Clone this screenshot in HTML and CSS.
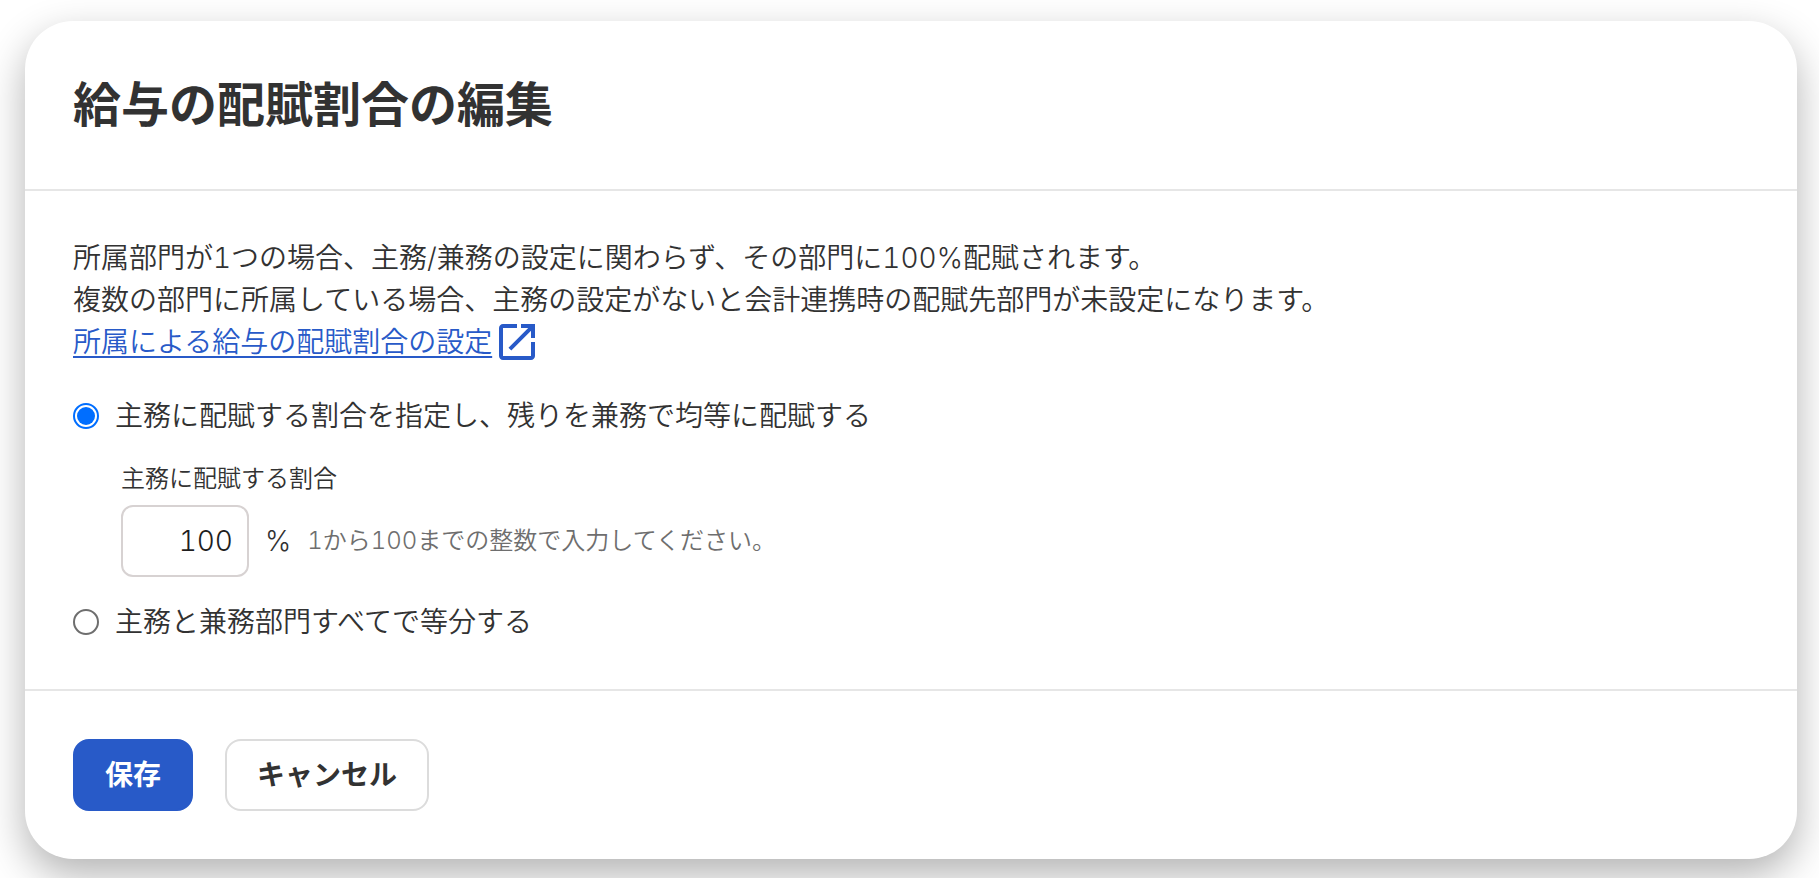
FILE: index.html
```html
<!DOCTYPE html>
<html lang="ja">
<head>
  <meta charset="UTF-8">
  <meta name="viewport" content="width=device-width, initial-scale=1.0">
  <title>給与の配賦割合の編集</title>
  <link rel="stylesheet" href="styles.css">
</head>
<body>
  <form class="dialog" role="dialog" aria-labelledby="dialogTitle">
    <header class="dialog-header">
      <h1 id="dialogTitle">給与の配賦割合の編集</h1>
    </header>

    <div class="dialog-body">
      <p class="description">
        所属部門が1つの場合、主務/兼務の設定に関わらず、その部門に100%配賦されます。<br>
        複数の部門に所属している場合、主務の設定がないと会計連携時の配賦先部門が未設定になります。<br>
        <a class="help-link" href="#"><span>所属による給与の配賦割合の設定</span><svg class="icon" viewBox="0 0 36 36" aria-hidden="true"><path d="M32 32H4V4h14V0H4C1.8 0 0 1.8 0 4v28c0 2.200 1.800 4 4 4h28c2.200 0 4-1.800 4-4V18h-4v14zM22 0v4h7.200L9.500 23.700l2.800 2.800L32 6.800V14h4V0H22z"/></svg></a>
      </p>

      <label class="radio">
        <input type="radio" name="method" value="main" checked>
        主務に配賦する割合を指定し、残りを兼務で均等に配賦する
      </label>

      <div class="ratio">
        <label class="ratio-label" for="ratio">主務に配賦する割合</label>
        <div class="ratio-row">
          <input type="text" id="ratio" inputmode="numeric" value="100" aria-describedby="ratioHint">
          <span class="unit">%</span>
          <span class="hint" id="ratioHint">1から100までの整数で入力してください。</span>
        </div>
      </div>

      <label class="radio">
        <input type="radio" name="method" value="equal">
        主務と兼務部門すべてで等分する
      </label>
    </div>

    <footer class="dialog-footer">
      <button type="submit" class="primary">保存</button>
      <button type="button">キャンセル</button>
    </footer>
  </form>
</body>
</html>
```
FILE: styles.css
```css
* { box-sizing: border-box; }
body {
  margin: 0;
  padding: 21px 22px 19px 25px;
  background: #fff;
  color: #323232;
  font-family: Inter, "Noto Sans CJK JP", sans-serif;
  font-size: 28px;
  font-weight: 350;
  font-variant-numeric: tabular-nums;
  line-height: 42px;
}
.dialog {
  background: #fff;
  border-radius: 48px;
  box-shadow: 0 16px 40px rgba(0,0,0,0.3);
}
.dialog-header {
  padding: 48px;
  border-bottom: 2px solid #e6e6e6;
}
h1 {
  margin: 0;
  font-size: 48px;
  font-weight: bold;
  line-height: 72px;
}
.dialog-body { padding: 46px 48px; }
.description { margin: 0 0 32px; }
.help-link {
  display: flex;
  align-items: center;
  gap: 7px;
  width: fit-content;
  color: #285ac8;
  text-decoration: none;
}
.help-link span {
  text-decoration: underline;
  text-decoration-thickness: 2px;
  text-underline-offset: 4px;
}
.icon {
  width: 36px;
  height: 36px;
  fill: currentColor;
}
.radio {
  display: flex;
  align-items: center;
  gap: 16px;
}
.radio input {
  appearance: none;
  flex-shrink: 0;
  width: 26px;
  height: 26px;
  margin: 0;
  border: 2px solid #6e6e6e;
  border-radius: 50%;
  background: #fff;
}
.radio input:checked {
  padding: 2px;
  border-color: #006eff;
  background: #006eff content-box;
}
.ratio { margin: 24px 48px; }
.ratio-label {
  display: block;
  margin-bottom: 8px;
  font-size: 24px;
  line-height: 36px;
}
.ratio-row {
  display: flex;
  align-items: center;
  gap: 16px;
}
.ratio-row input {
  width: 128px;
  height: 72px;
  padding: 0 14px;
  border: 2px solid #d7d2d2;
  border-radius: 12px;
  color: #1e1e1e;
  font: inherit;
  font-variant-numeric: tabular-nums;
  text-align: right;
}
.hint {
  color: #6e6e6e;
  font-size: 24px;
}
.dialog-footer {
  display: flex;
  gap: 32px;
  padding: 48px;
  border-top: 2px solid #e6e6e6;
}
button {
  height: 72px;
  padding: 0 30px;
  border: 2px solid #dcdcdc;
  border-radius: 16px;
  background: #fff;
  color: #323232;
  font: inherit;
  font-weight: bold;
  cursor: pointer;
}
.primary {
  border-color: #285ac8;
  background: #285ac8;
  color: #fff;
}
```
